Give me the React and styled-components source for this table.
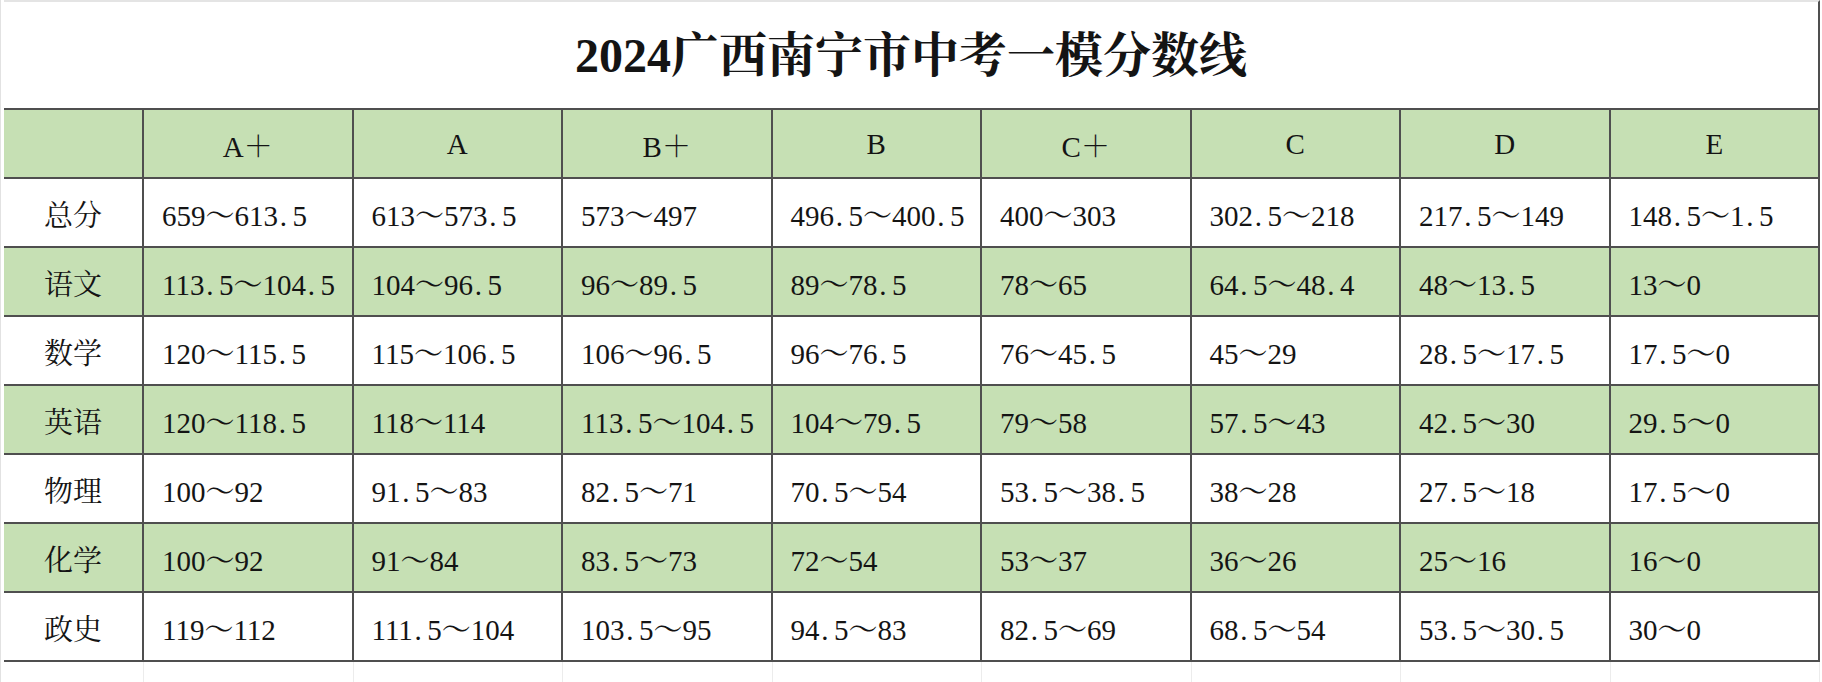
import React from "react";
import styled, { createGlobalStyle } from "styled-components";

const Global = createGlobalStyle`
  html, body { margin: 0; padding: 0; background: #ffffff; }
  * { box-sizing: border-box; }
`;

const FONT = `"Liberation Serif", "Noto Serif CJK SC", "Noto Sans CJK SC", serif`;
const LINE = "#4f4f4f";
const GREEN = "#c6e0b4";

const Sheet = styled.div`
  width: 1822px;
  height: 682px;
  overflow: hidden;
  background: #fff;
  padding-left: 3px;
  border-left: 1px solid #e2e2e2;
  font-family: ${FONT};
  color: #141414;
`;

const Title = styled.div`
  width: 1816px;
  height: 108px;
  display: flex;
  align-items: center;
  justify-content: center;
  padding-bottom: 8px;
  border-top: 2px solid #e4e4e4;
  border-right: 2px solid ${LINE};
  font-size: 48px;
  font-weight: 700;
  letter-spacing: 0;
`;

const Grid = styled.div`
  width: 1816px;
  display: grid;
  grid-template-columns: 140px repeat(8, 1fr);
  grid-auto-rows: 69px;
  border-top: 2px solid ${LINE};
`;

const Cell = styled.div`
  display: flex;
  align-items: center;
  justify-content: ${(p) => (p.$center ? "center" : "flex-start")};
  padding: 1px 0 0 ${(p) => (p.$center ? "0" : "18px")};
  background: ${(p) => (p.$green ? GREEN : "#ffffff")};
  border-right: 2px solid ${LINE};
  border-bottom: 2px solid ${LINE};
  font-size: 29px;
  white-space: nowrap;
  overflow: hidden;
`;

const Text = styled.span`
  display: inline-block;
  white-space: nowrap;
`;

const Dot = styled.span`
  display: inline-block;
  width: 0.5em;
  padding-left: 0.06em;
`;

const Spill = styled.div`
  width: 1816px;
  display: grid;
  grid-template-columns: 140px repeat(8, 1fr);
  height: 24px;
`;

const SpillCell = styled.div`
  border-right: 1px solid #ececec;
`;

const grades = ["A＋", "A", "B＋", "B", "C＋", "C", "D", "E"];

const rows = [
  ["总分", "659～613.5", "613～573.5", "573～497", "496.5～400.5", "400～303", "302.5～218", "217.5～149", "148.5～1.5"],
  ["语文", "113.5～104.5", "104～96.5", "96～89.5", "89～78.5", "78～65", "64.5～48.4", "48～13.5", "13～0"],
  ["数学", "120～115.5", "115～106.5", "106～96.5", "96～76.5", "76～45.5", "45～29", "28.5～17.5", "17.5～0"],
  ["英语", "120～118.5", "118～114", "113.5～104.5", "104～79.5", "79～58", "57.5～43", "42.5～30", "29.5～0"],
  ["物理", "100～92", "91.5～83", "82.5～71", "70.5～54", "53.5～38.5", "38～28", "27.5～18", "17.5～0"],
  ["化学", "100～92", "91～84", "83.5～73", "72～54", "53～37", "36～26", "25～16", "16～0"],
  ["政史", "119～112", "111.5～104", "103.5～95", "94.5～83", "82.5～69", "68.5～54", "53.5～30.5", "30～0"],
];

function Value({ text }) {
  const parts = text.split(".");
  return (
    <Text>
      {parts.map((p, i) => (
        <React.Fragment key={i}>
          {i > 0 && <Dot>.</Dot>}
          {p}
        </React.Fragment>
      ))}
    </Text>
  );
}

export default function App() {
  return (
    <>
      <Global />
      <Sheet>
        <Title>2024广西南宁市中考一模分数线</Title>
        <Grid>
          <Cell $green $center />
          {grades.map((g) => (
            <Cell key={g} $green $center>
              {g}
            </Cell>
          ))}
          {rows.map((r, i) => {
            const green = i % 2 === 1;
            return r.map((v, j) => (
              <Cell key={`${i}-${j}`} $green={green} $center={j === 0}>
                <Value text={v} />
              </Cell>
            ));
          })}
        </Grid>
        <Spill>
          {Array.from({ length: 9 }).map((_, i) => (
            <SpillCell key={i} />
          ))}
        </Spill>
      </Sheet>
    </>
  );
}
